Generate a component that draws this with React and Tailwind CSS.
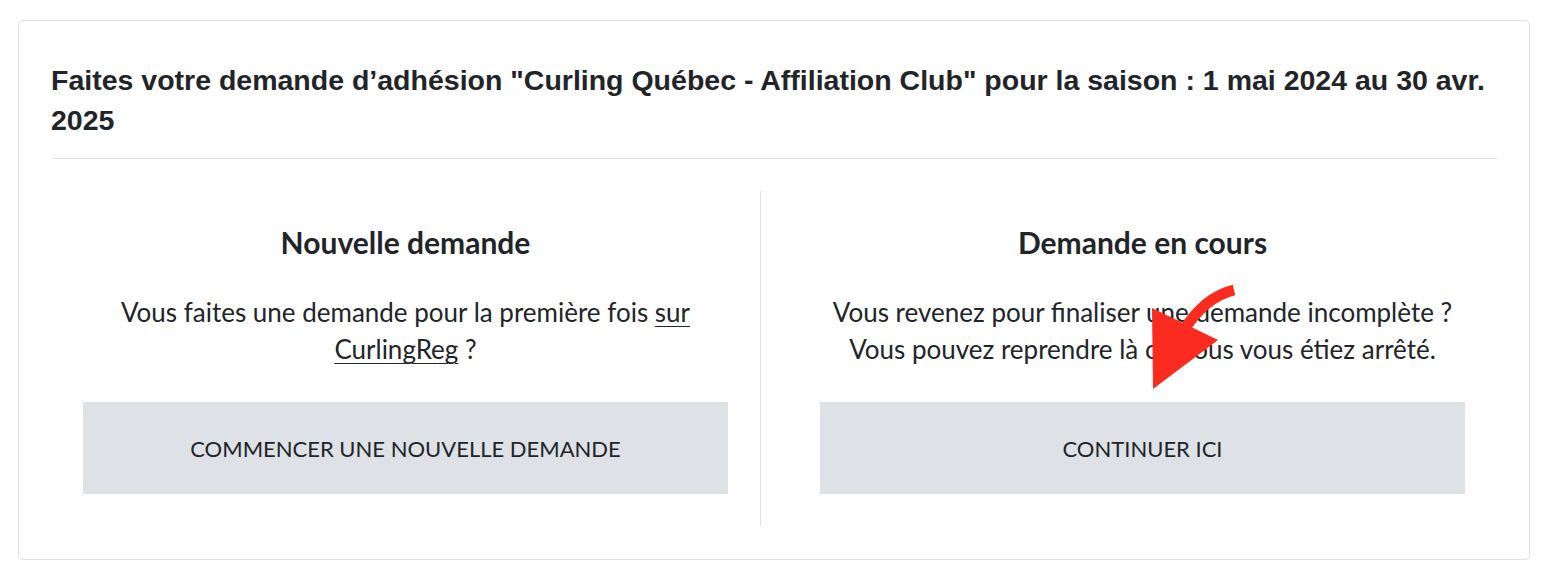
import React from 'react'

const body = { fontFamily: 'Lato, "Noto Sans", sans-serif' }

function CurvedArrow() {
  return (
    <svg
      className="absolute left-[1127px] top-[258px] pointer-events-none"
      width="95"
      height="115"
      viewBox="0 0 95 115"
    >
      <path d="M88 11 Q58 18 36 54" fill="none" stroke="#fb2b1f" strokeWidth="11" />
      <polygon points="7,110 6,29 72,61" fill="#fb2b1f" />
    </svg>
  )
}

export default function App() {
  return (
    <div className="bg-white pt-5 pl-[18px] pr-6 pb-3 text-[#212529]">
      <div className="relative rounded-[5px] border border-[#dee2e6] bg-white px-8">
        {/* En-tête */}
        <h2
          className="pt-[39px] pb-[18px] text-[28.5px] leading-[40px] font-bold border-b border-[#dee2e6]"
          style={{ fontFamily: '"Liberation Sans", Arial, sans-serif' }}
        >
          Faites votre demande d’adhésion "Curling Québec - Affiliation Club" pour la saison : 1 mai 2024 au 30 avr. 2025
        </h2>

        <div className="flex pt-8 pb-[33px]" style={body}>
          {/* Nouvelle demande */}
          <div className="w-[709px] px-8 pt-[35px] pb-8 flex flex-col items-center text-center">
            <h3 className="text-[30px] leading-[32px] font-bold">Nouvelle demande</h3>
            <p className="mt-[36px] text-[26px] leading-[37px]">
              Vous faites une demande pour la première fois <span className="underline underline-offset-4 decoration-1">sur CurlingReg</span> ?
            </p>
            <button className="mt-[34px] w-full h-[92px] bg-[#dee2e6] text-[22px] uppercase">
              Commencer une nouvelle demande
            </button>
          </div>

          {/* Demande en cours */}
          <div className="flex-1 border-l border-[#dee2e6] pl-[59px] pr-8 pt-[35px] pb-8 flex flex-col items-center text-center">
            <h3 className="text-[30px] leading-[32px] font-bold">Demande en cours</h3>
            <p className="mt-[36px] text-[26px] leading-[37px]">
              Vous revenez pour finaliser une demande incomplète ?<br />
              Vous pouvez reprendre là où vous vous étiez arrêté.
            </p>
            <button className="mt-[34px] w-full h-[92px] bg-[#dee2e6] text-[22px] uppercase">
              Continuer ici
            </button>
          </div>
        </div>

        <CurvedArrow />
      </div>
    </div>
  )
}
